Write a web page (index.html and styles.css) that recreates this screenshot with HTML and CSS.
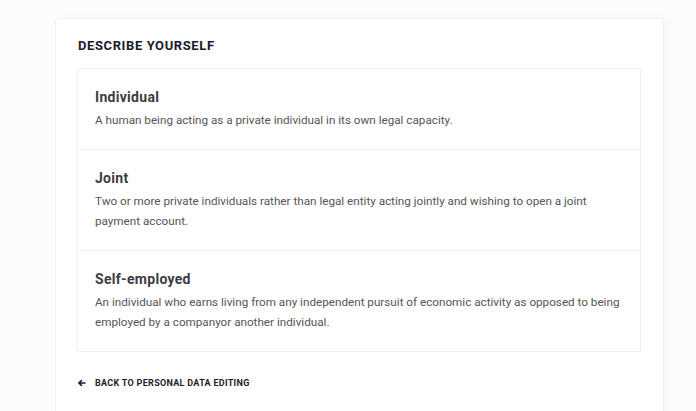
FILE: index.html
```html
<!DOCTYPE html>
<html>
<head>
<meta charset="utf-8">
<link rel="stylesheet" href="styles.css">
</head>
<body>
<div class="page">
  <section class="card">
    <h2 class="heading">DESCRIBE YOURSELF</h2>
    <ul class="options">
      <li class="option">
        <h3 class="option-title">Individual</h3>
        <p class="option-desc">A human being acting as a private individual in its own legal capacity.</p>
      </li>
      <li class="option">
        <h3 class="option-title">Joint</h3>
        <p class="option-desc">Two or more private individuals rather than legal entity acting jointly and wishing to open a joint payment account.</p>
      </li>
      <li class="option">
        <h3 class="option-title">Self-employed</h3>
        <p class="option-desc">An individual who earns living from any independent pursuit of economic activity as opposed to being employed by a companyor another individual.</p>
      </li>
    </ul>
    <a class="back" href="#">
      <svg class="back-icon" width="8" height="8" viewBox="0 0 8 8"><path d="M7.5 4H1.5M4 1L1 4l3 3" fill="none" stroke="#1d1d2b" stroke-width="1.6"/></svg>
      <span>BACK TO PERSONAL DATA EDITING</span>
    </a>
  </section>
</div>
</body>
</html>
```
FILE: styles.css
```css
html, body {
  margin: 0;
  padding: 0;
}
body {
  background: #fcfcfc;
  font-family: Roboto, "Liberation Sans", sans-serif;
  width: 696px;
  height: 411px;
  overflow: hidden;
}
.page {
  padding: 19px 0 0 56px;
}
.card {
  width: 607px;
  background: #fff;
  box-sizing: border-box;
  padding: 17px 22px 40px 21px;
  box-shadow: 4px 0 12px rgba(0, 0, 0, 0.035), 0 0 0 1px #f5f5f5;
  min-height: 420px;
}
.heading {
  margin: 0 0 12px 1px;
  font-size: 13px;
  font-weight: 700;
  color: #1b1b2b;
  line-height: 20px;
  letter-spacing: 0.6px;
}
.options {
  list-style: none;
  margin: 0;
  padding: 0;
  border: 1px solid #eef2f3;
}
.option {
  padding: 18px 18px 19px 17px;
  border-top: 1px solid #eef2f3;
}
.option:first-child {
  border-top: none;
}
.option-title {
  margin: 0;
  font-size: 14px;
  font-weight: 700;
  color: #3c3c44;
  line-height: 20px;
  letter-spacing: 0.3px;
}
.option-desc {
  margin: 3px 0 0;
  font-size: 11.7px;
  color: #555;
  line-height: 20px;
  font-weight: 400;
}
.back {
  display: flex;
  align-items: center;
  gap: 9px;
  margin: 23px 0 0 1px;
  text-decoration: none;
  color: #1d1d2b;
  font-size: 9px;
  font-weight: 700;
  line-height: 16px;
  letter-spacing: 0.3px;
}
.back-icon {
  display: block;
}
```
